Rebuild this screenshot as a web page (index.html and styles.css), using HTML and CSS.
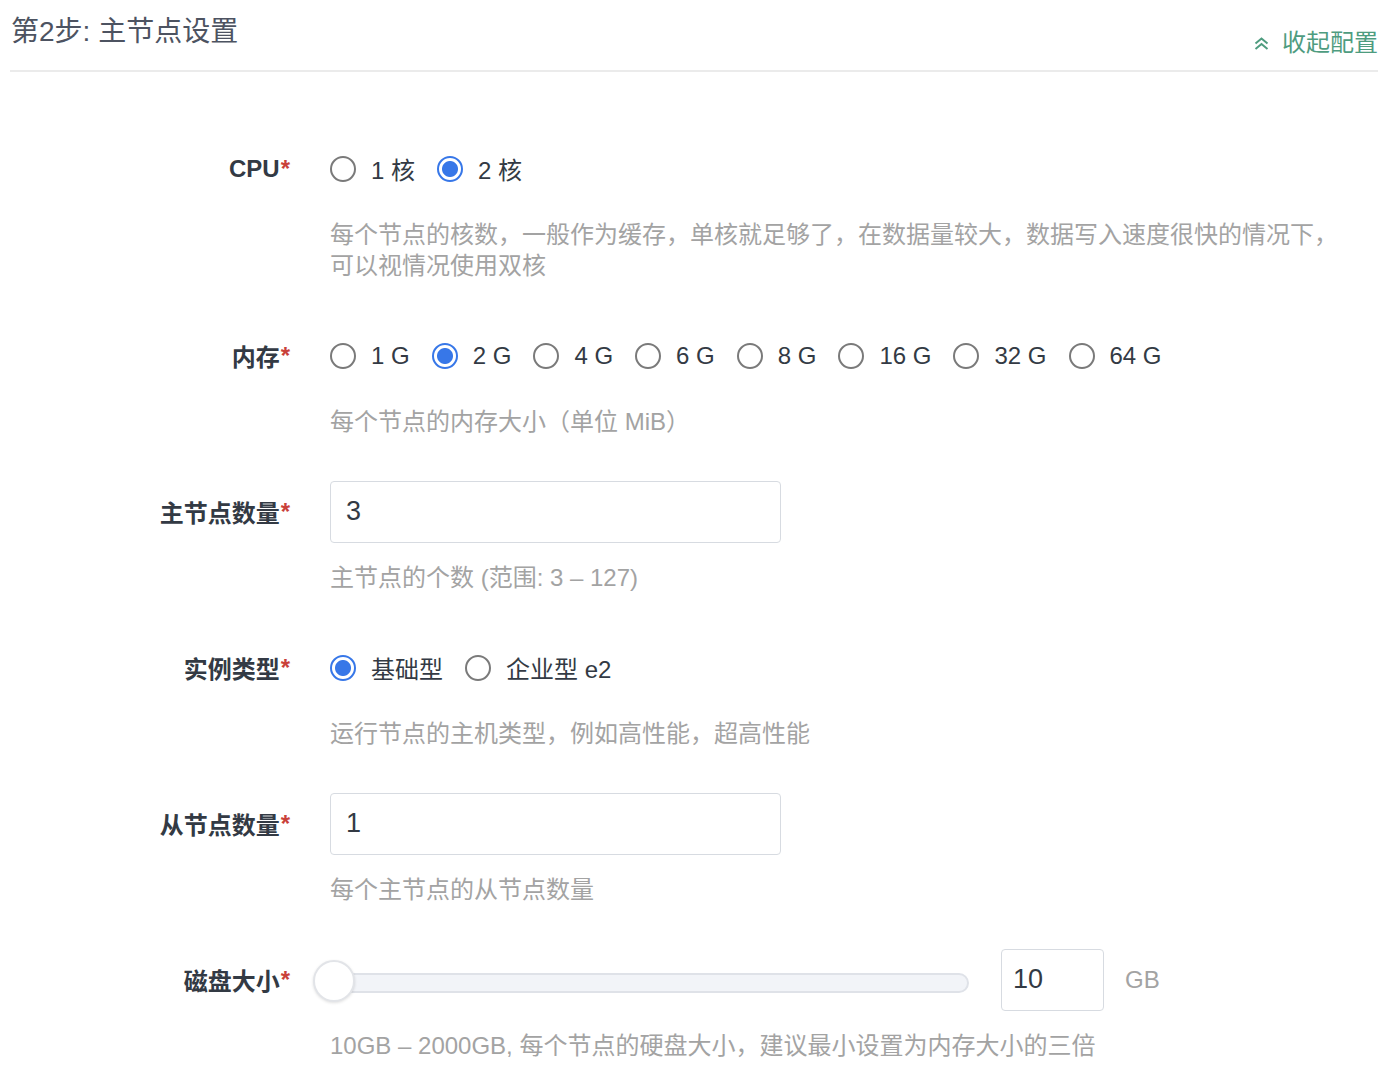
FILE: index.html
```html
<!DOCTYPE html>
<html lang="zh-CN">
<head>
<meta charset="utf-8">
<title>第2步: 主节点设置</title>
<link rel="stylesheet" href="styles.css">
</head>
<body>
<div class="panel">
  <div class="header">
    <h3 class="title">第2步: 主节点设置</h3>
    <a class="collapse" href="#">
      <svg class="chev" width="15" height="15" viewBox="0 0 15 15" aria-hidden="true"><polyline points="1.5,7.5 7.5,2.5 13.5,7.5" fill="none" stroke="currentColor" stroke-width="2"/><polyline points="1.5,13 7.5,8 13.5,13" fill="none" stroke="currentColor" stroke-width="2"/></svg>
      <span>收起配置</span>
    </a>
  </div>

  <form class="form">
    <div class="group">
      <div class="label">CPU<span class="req">*</span></div>
      <div class="field">
        <div class="control">
          <label class="radio"><span class="dot"></span><span>1 核</span></label>
          <label class="radio"><span class="dot on"></span><span>2 核</span></label>
        </div>
        <p class="help">每个节点的核数，一般作为缓存，单核就足够了，在数据量较大，数据写入速度很快的情况下，可以视情况使用双核</p>
      </div>
    </div>

    <div class="group">
      <div class="label">内存<span class="req">*</span></div>
      <div class="field">
        <div class="control">
          <label class="radio"><span class="dot"></span><span>1 G</span></label>
          <label class="radio"><span class="dot on"></span><span>2 G</span></label>
          <label class="radio"><span class="dot"></span><span>4 G</span></label>
          <label class="radio"><span class="dot"></span><span>6 G</span></label>
          <label class="radio"><span class="dot"></span><span>8 G</span></label>
          <label class="radio"><span class="dot"></span><span>16 G</span></label>
          <label class="radio"><span class="dot"></span><span>32 G</span></label>
          <label class="radio"><span class="dot"></span><span>64 G</span></label>
        </div>
        <p class="help">每个节点的内存大小（单位 MiB）</p>
      </div>
    </div>

    <div class="group">
      <div class="label">主节点数量<span class="req">*</span></div>
      <div class="field">
        <div class="control">
          <div class="input wide">3</div>
        </div>
        <p class="help">主节点的个数 (范围: 3 – 127)</p>
      </div>
    </div>

    <div class="group">
      <div class="label">实例类型<span class="req">*</span></div>
      <div class="field">
        <div class="control">
          <label class="radio"><span class="dot on"></span><span>基础型</span></label>
          <label class="radio"><span class="dot"></span><span>企业型 e2</span></label>
        </div>
        <p class="help">运行节点的主机类型，例如高性能，超高性能</p>
      </div>
    </div>

    <div class="group">
      <div class="label">从节点数量<span class="req">*</span></div>
      <div class="field">
        <div class="control">
          <div class="input wide">1</div>
        </div>
        <p class="help">每个主节点的从节点数量</p>
      </div>
    </div>

    <div class="group">
      <div class="label">磁盘大小<span class="req">*</span></div>
      <div class="field">
        <div class="control">
          <div class="slider"><div class="track"></div><div class="thumb"></div></div>
          <div class="input small">10</div>
          <span class="unit">GB</span>
        </div>
        <p class="help">10GB – 2000GB, 每个节点的硬盘大小，建议最小设置为内存大小的三倍</p>
      </div>
    </div>
  </form>
</div>
</body>
</html>
```

FILE: styles.css
```css
* { box-sizing: border-box; }
html, body { margin: 0; padding: 0; background: #ffffff; }
body {
  font-family: "Liberation Sans", "Noto Sans CJK SC", sans-serif;
  color: #333333;
}
.panel {
  margin-left: 10px;
  width: 1368px;
}
.header {
  display: flex;
  justify-content: space-between;
  align-items: flex-start;
  height: 72px;
  padding-top: 12px;
  border-bottom: 2px solid #ebebeb;
}
.title {
  margin: 0;
  font-weight: normal;
  font-size: 28px;
  line-height: 40px;
  color: #4d5361;
  padding-left: 1px;
}
.collapse {
  margin-top: 15px;
  display: flex;
  align-items: center;
  gap: 13px;
  color: #4e9c7f;
  text-decoration: none;
  font-size: 24px;
  line-height: 32px;
}
.chev { display: block; margin-top: 1px; }

.form { padding-top: 65.5px; }
.group {
  display: grid;
  grid-template-columns: 280px 1fr;
  column-gap: 40px;
  margin-bottom: 44px;
}
.label {
  height: 62px;
  display: flex;
  align-items: center;
  justify-content: flex-end;
  font-size: 24px;
  font-weight: bold;
  color: #333a44;
}
.req { color: #c9413a; margin-left: 1px; }
.field { width: 1015px; }
.control {
  height: 62px;
  display: flex;
  align-items: center;
}
.help {
  margin: 19px 0 0 0;
  font-size: 24px;
  line-height: 31px;
  color: #a3a3a3;
}
.radio {
  display: flex;
  align-items: center;
  gap: 15px;
  margin-right: 22px;
  font-size: 24px;
  color: #333a44;
}
.dot {
  width: 26px;
  height: 26px;
  border-radius: 50%;
  border: 2px solid #7a7a7a;
  background: #ffffff;
  flex: none;
}
.dot.on {
  border-color: #3777e8;
  background: radial-gradient(circle, #3777e8 0 7.5px, #ffffff 8.5px);
}
.input {
  height: 62px;
  border: 1px solid #d7dbe1;
  border-radius: 4px;
  display: flex;
  align-items: center;
  padding-left: 15px;
  font-size: 27px;
  color: #333a44;
  background: #ffffff;
}
.input.wide { width: 451px; }
.input.small { width: 103px; padding-left: 11px; }
.slider {
  position: relative;
  width: 656px;
  height: 42px;
  margin-left: -17px;
  margin-right: 32px;
  display: flex;
  align-items: center;
  flex: none;
}
.track {
  margin-left: 20px;
  width: 636px;
  height: 20px;
  border-radius: 10px;
  background: #f2f4f8;
  border: 2px solid #dfe2e8;
  margin-top: 6px;
}
.thumb {
  position: absolute;
  left: 0;
  top: 1px;
  width: 42px;
  height: 42px;
  border-radius: 50%;
  background: #ffffff;
  border: 2px solid #e2e4e8;
  box-shadow: 0 1px 3px rgba(0,0,0,0.12);
}
.unit {
  margin-left: 21px;
  font-size: 24px;
  color: #a3a3a3;
}
```
